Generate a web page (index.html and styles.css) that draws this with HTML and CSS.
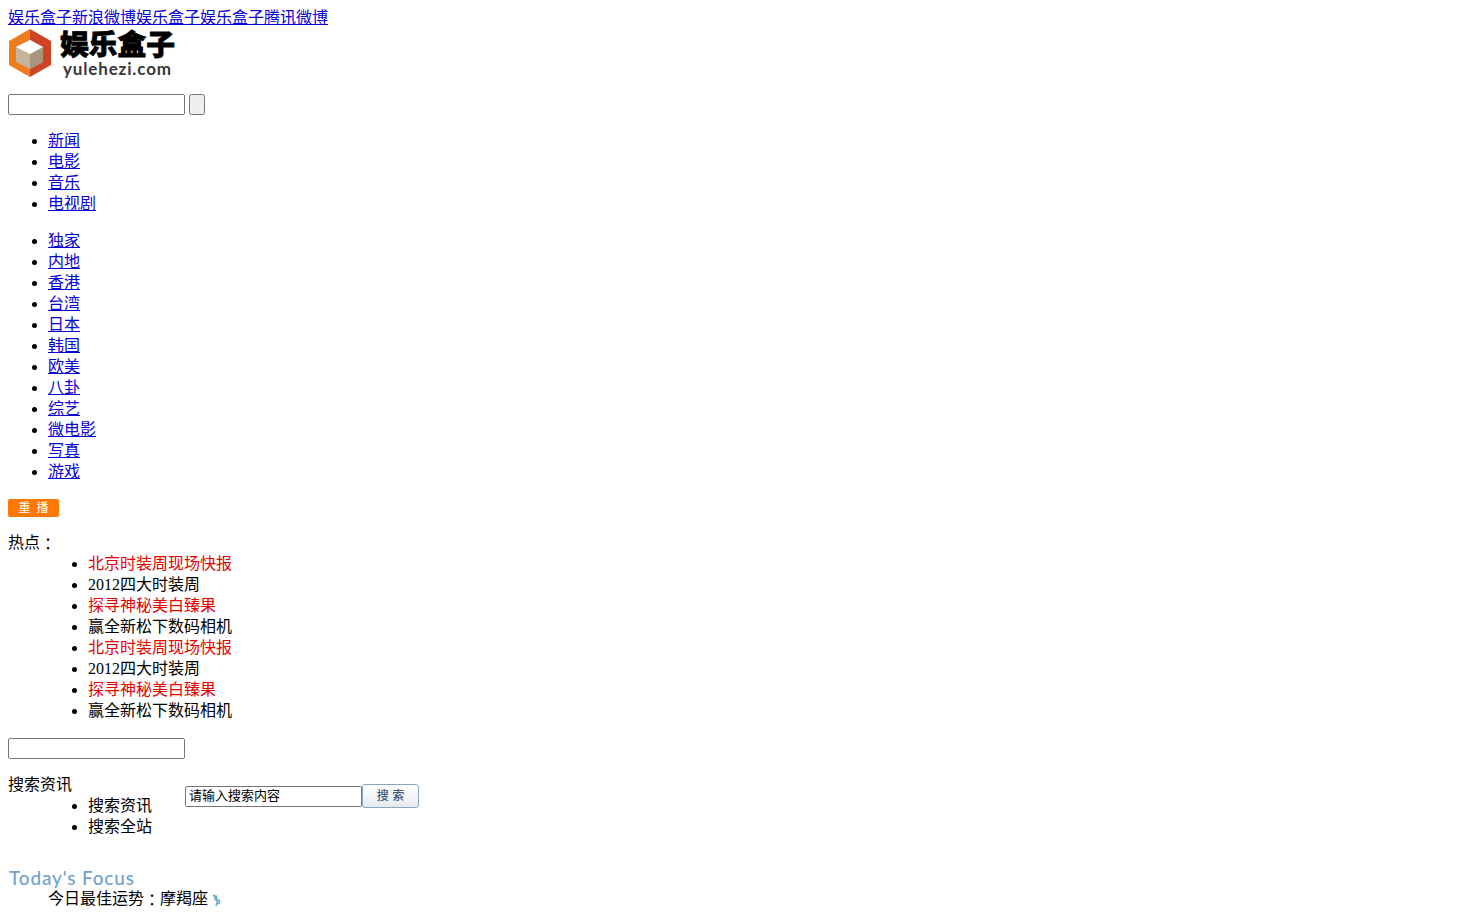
FILE: index.html
```html
<!DOCTYPE html>
<html>
	<head>
		<meta charset="UTF-8">
		<title>娱乐盒子</title>
		<link rel="stylesheet" href="styles.css">
	</head>
	<body>
		<!--顶部-->
		<div class="top">
			<a href="#">娱乐盒子新浪微博</a><a href="#">娱乐盒子</a><a href="#">娱乐盒子腾讯微博</a>
		</div>
		<div class="logo">
			<svg width="170" height="50" viewBox="0 0 170 50">
				<polygon points="22,0 1,12 1,36 22,48" fill="#ee7b1c"/>
				<polygon points="22,0 43,12 43,36 22,48" fill="#cf4326"/>
				<polygon points="22,11 35,18 35,33 22,40 8,33 8,18" fill="#c4b49a"/>
				<polygon points="22,25 35,18 35,33 22,40" fill="#a8967c"/>
				<polygon points="22,11 35,18 22,25 8,18" fill="#fff"/>
				<text class="logo-cn" x="52" y="26" textLength="115" lengthAdjust="spacingAndGlyphs">娱乐盒子</text>
				<text class="logo-en" x="55" y="46" textLength="108">yulehezi.com</text>
			</svg>
		</div>
		<form class="search">
			<input type="text" />
			<input type="button" value="" />
		</form>
		<!--导航-->
		<ul>
			<li><a href="#">新闻</a></li>
			<li><a href="#">电影</a></li>
			<li><a href="#">音乐</a></li>
			<li><a href="#">电视剧</a></li>
		</ul>
		<ul>
			<li><a href="#">独家</a></li>
			<li><a href="#">内地</a></li>
			<li><a href="#">香港</a></li>
			<li><a href="#">台湾</a></li>
			<li><a href="#">日本</a></li>
			<li><a href="#">韩国</a></li>
			<li><a href="#">欧美</a></li>
			<li><a href="#">八卦</a></li>
			<li><a href="#">综艺</a></li>
			<li><a href="#">微电影</a></li>
			<li><a href="#">写真</a></li>
			<li><a href="#">游戏</a></li>
		</ul>
		<div class="replay">重 播</div>
		<!--热点-->
		<dl>
			<dt>热点<span class="colon">：</span></dt>
			<dd>
				<ul>
					<li><span class="red">北京时装周现场快报</span></li>
					<li>2012四大时装周</li>
					<li><span class="red">探寻神秘美白臻果</span></li>
					<li>赢全新松下数码相机</li>
					<li><span class="red">北京时装周现场快报</span></li>
					<li>2012四大时装周</li>
					<li><span class="red">探寻神秘美白臻果</span></li>
					<li>赢全新松下数码相机</li>
				</ul>
			</dd>
		</dl>
		<!--搜索-->
		<form class="site-search">
			<div class="type">
				<input type="text" />
				<dl>
					<dt>搜索资讯</dt>
					<dd>
						<ul>
							<li>搜索资讯</li>
							<li>搜索全站</li>
						</ul>
					</dd>
				</dl>
			</div>
			<input type="text" class="keyword" value="请输入搜索内容" />
			<button type="button" class="btn">搜 索</button>
		</form>
		<!--今日焦点-->
		<div class="focus">
			<svg width="128" height="20" viewBox="0 0 128 20">
				<text class="focus-title" x="1" y="16" textLength="125">Today's Focus</text>
			</svg>
			<p>今日最佳运势<span class="colon">：</span>摩羯座 <svg class="star" width="9" height="13" viewBox="0 0 9 13">
				<path d="M1 1.500h1.500l1 5M4 1.500l1 4v3.500l-1 3M5 7q3-2 2.500 1t-2.500 1" fill="none" stroke="#62a9cb" stroke-width="1.500"/>
			</svg></p>
		</div>
	</body>
</html>
```
FILE: styles.css
```css
body{
	margin: 8px;
	height: 907px;
	overflow: hidden;
	font-family: "Liberation Serif","Noto Sans CJK SC",serif;
	font-size: 16px;
	line-height: 19px;
	background: #fff;
}
a{
	color: #0a00d4;
}
svg{
	display: block;
	overflow: visible;
}
li,dt{
	padding-bottom: 2px;
}
input{
	font-family: "Liberation Sans","Noto Sans CJK SC",sans-serif;
}
input[type=text]{
	box-sizing: border-box;
	width: 177px;
	height: 21px;
	margin: 0;
}
.top{
	height: 21px;
}
.logo{
	height: 65px;
}
.search{
	display: flex;
	gap: 4px;
	height: 21px;
}
.search input[type=button]{
	width: 16px;
	height: 21px;
}
.replay{
	width: 51px;
	height: 18px;
	line-height: 18px;
	border-radius: 2px;
	background: #ff7800;
	color: #fff;
	font-size: 12px;
	word-spacing: 3px;
	text-align: center;
}
.red{
	color: #e60000;
}
.colon{
	font-family: "Noto Sans CJK TC",sans-serif;
	line-height: 1;
	vertical-align: -2px;
}
.site-search{
	display: flex;
	align-items: center;
}
.type{
	width: 177px;
	height: 116px;
}
.type input{
	display: block;
}
input.keyword{
	padding: 0 2px 3px;
	font-size: 13px;
}
.btn{
	width: 57px;
	height: 24px;
	padding: 0;
	border: 1px solid #8ba6bf;
	border-radius: 3px;
	background: linear-gradient(#fff,#e6eaf0);
	color: #3b5780;
	font: 500 12px/22px "Liberation Sans","Noto Sans CJK SC",sans-serif;
}
.logo-cn{
	font: 900 28px "Noto Sans CJK SC",sans-serif;
	stroke: #000;
	stroke-width: .8px;
}
.logo-en{
	font: bold 17px Lato,sans-serif;
	fill: #383838;
}
.focus{
	margin-top: 15px;
}
.focus p{
	margin: 0 0 0 40px;
	line-height: 19px;
}
.focus-title{
	font: 500 19px Lato,sans-serif;
	fill: #74a2cb;
}
.star{
	display: inline-block;
	vertical-align: -3px;
}
```
